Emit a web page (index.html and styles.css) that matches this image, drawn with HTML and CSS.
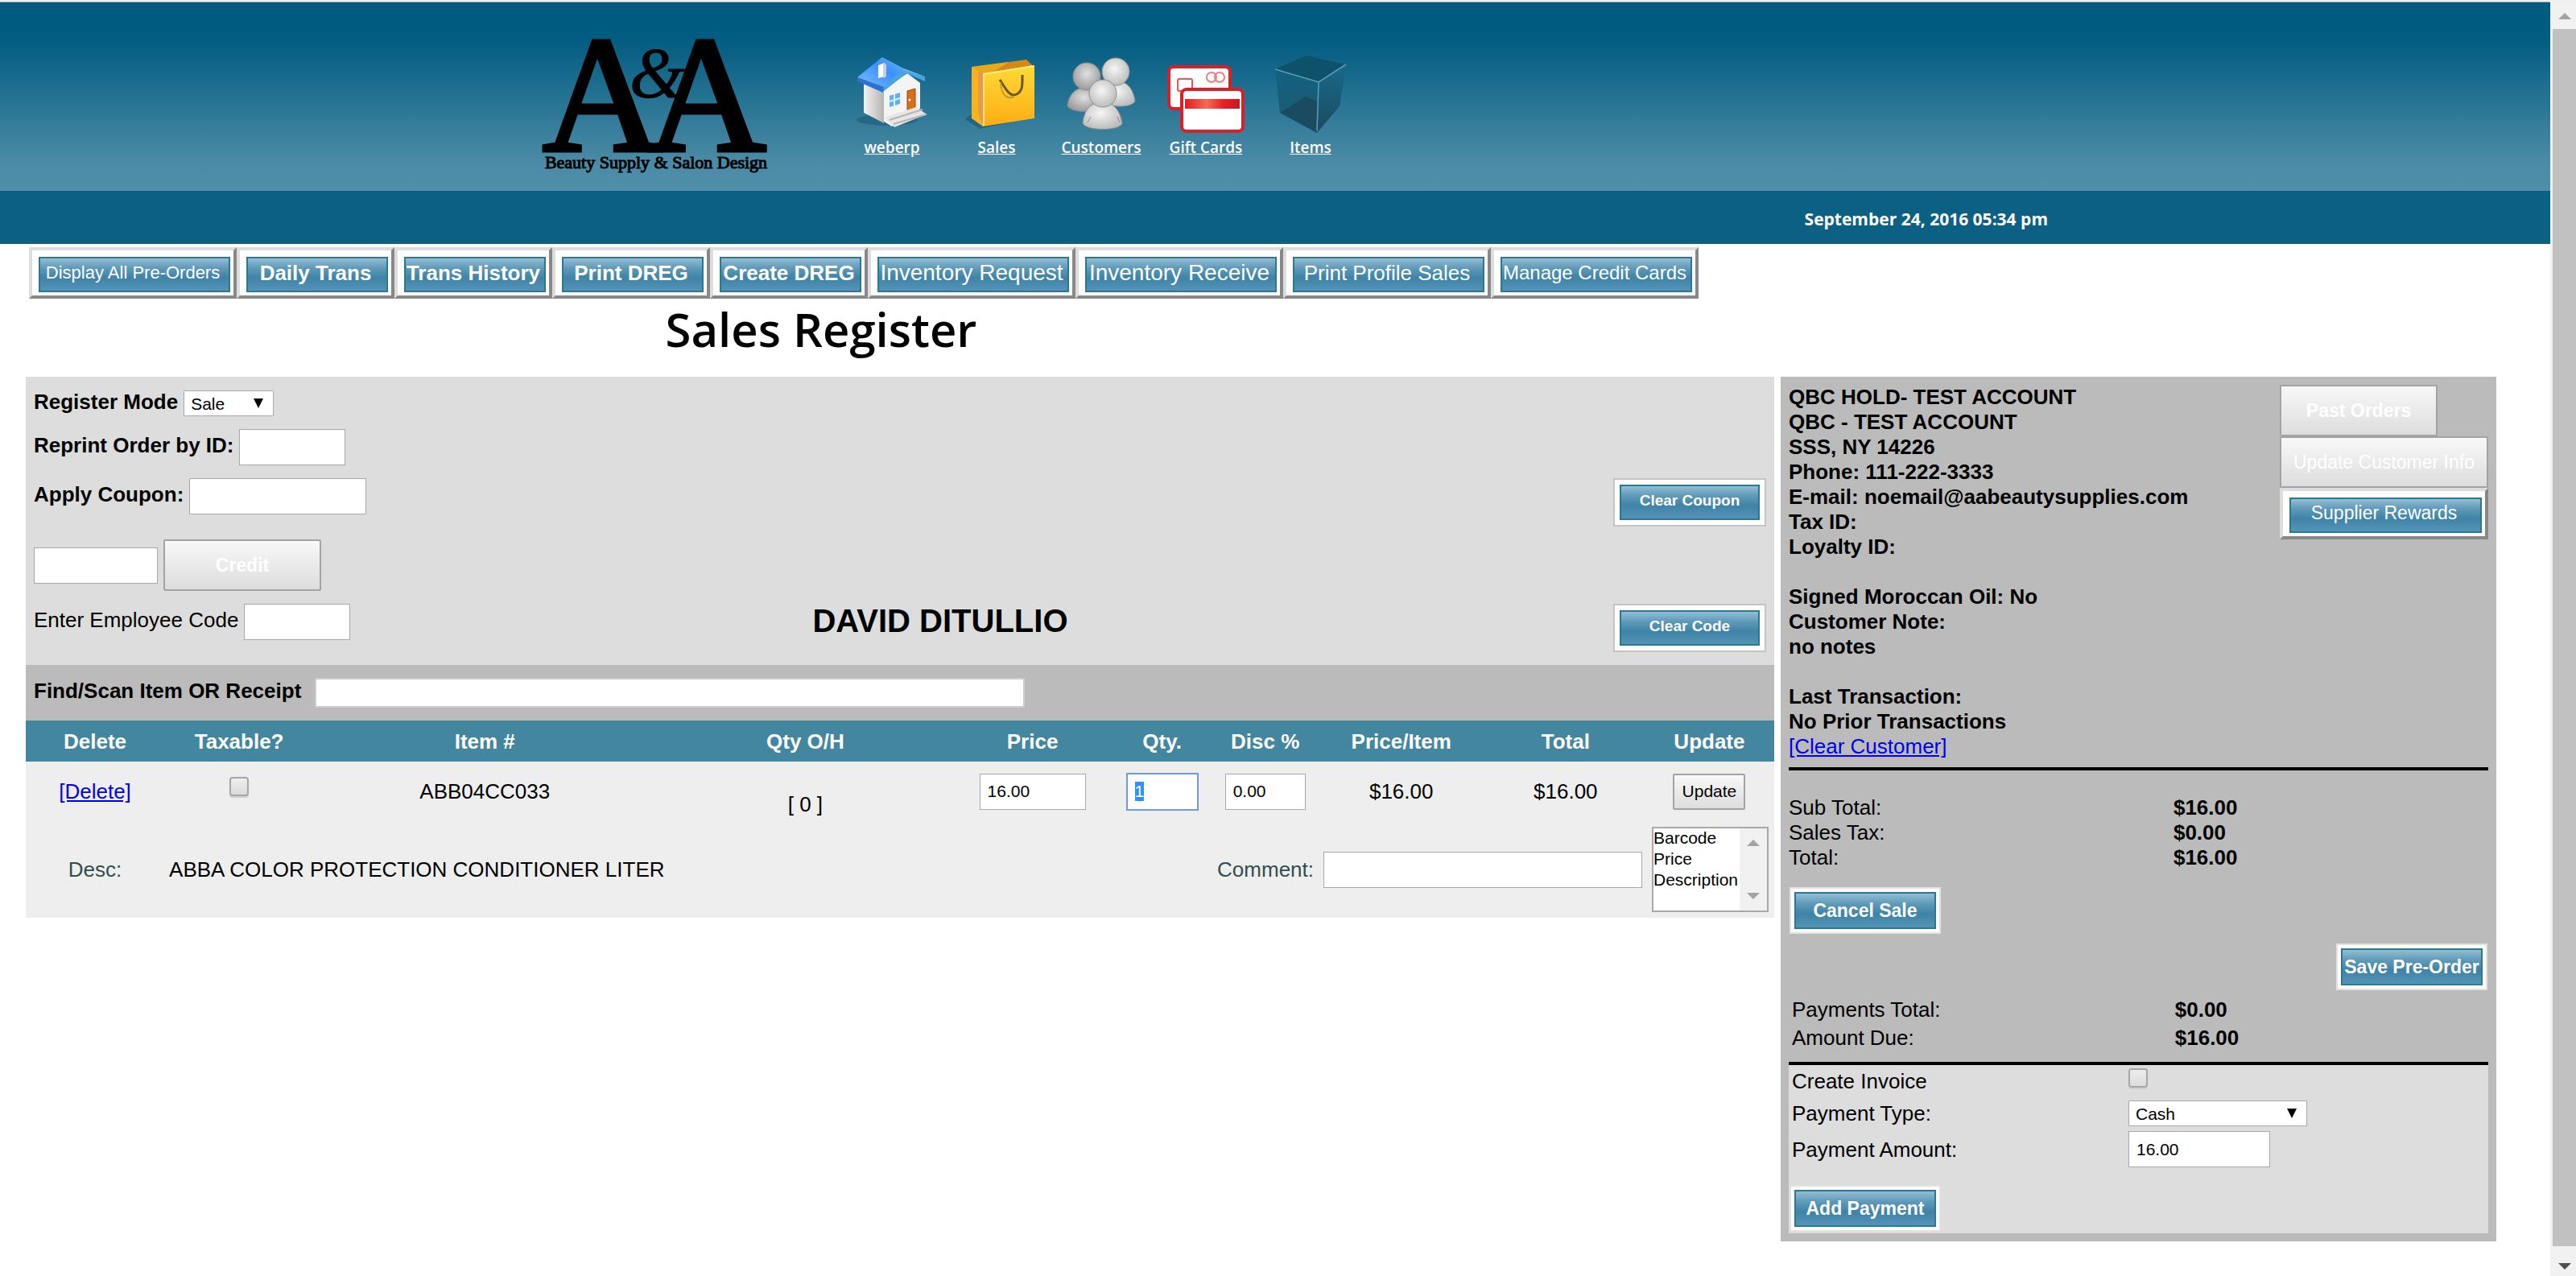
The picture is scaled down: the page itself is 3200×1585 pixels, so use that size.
FILE: index.html
```html
<!DOCTYPE html>
<html lang="en">
<head>
<meta charset="utf-8">
<title>Sales Register</title>
<link rel="stylesheet" href="styles.css">
</head>
<body>
<div class="window">
<div class="page">
  <header>
    <div class="banner">
      <svg class="logo" viewBox="0 0 290 180" role="img" aria-label="A&amp;A Beauty Supply &amp; Salon Design">
        <g class="logo-letters">
          <text x="4" y="147" font-size="206">A</text>
          <text x="133" y="147" font-size="206">A</text>
        </g>
        <text class="logo-amp" x="112" y="80" font-size="88">&amp;</text>
        <text class="logo-tag" x="145" y="169" font-size="22" text-anchor="middle">Beauty Supply &amp; Salon Design</text>
      </svg>
      <nav>
        <a href="#weberp">
          <svg viewBox="0 0 96 96">
            <defs>
              <linearGradient id="wall" x1="0" x2="1"><stop offset="0" stop-color="#f2f2f2"/><stop offset="1" stop-color="#b4b4b4"/></linearGradient>
              <linearGradient id="roof" x1="0" y1="1" x2="1" y2="0"><stop offset="0" stop-color="#7cc0ff"/><stop offset=".6" stop-color="#3a90fa"/><stop offset="1" stop-color="#6fb6ff"/></linearGradient>
            </defs>
            <ellipse cx="42" cy="80" rx="38" ry="7" fill="#0b3a50" opacity=".3"/>
            <path d="M13 33 38 44V84L13 71Z" fill="url(#wall)"/>
            <path d="M38 42 67 22 83 34V66L48 88 38 82Z" fill="#f4f4f4"/>
            <path d="M5 27 36 2 63 18 38 41Z" fill="url(#roof)"/>
            <path d="M5 27 38 39 37 46 5 32Z" fill="#2c72d0"/>
            <path d="M38 39 62 16 89 26V32L66 22 37 45Z" fill="#4ba3e2"/>
            <path d="M36 2 62 16 89 26 63 18Z" fill="#79bcff"/>
            <path d="M31 12 39 9V26L31 28Z" fill="#fff"/><path d="M37 10 41 11V26L37 28Z" fill="#c9cfe0"/>
            <path d="M45 50 58 46V60L45 64Z" fill="#5fb0f5"/><path d="M51 48V62M45 57 58 53" stroke="#d8eeff" stroke-width="2"/>
            <path d="M67 44 77 41V66L67 69Z" fill="#d96d18" stroke="#9b4c12"/><circle cx="70" cy="55" r="1.500" fill="#fff"/>
            <path d="M39 77 78 64 91 73 51 89Z" fill="#e6e6e6"/><path d="M45 80 86 67M50 85 91 73" stroke="#b5b5b5" stroke-width="2"/>
          </svg>
          <span>weberp</span>
        </a>
        <a href="#sales">
          <svg viewBox="0 0 96 96">
            <defs><linearGradient id="bag" x1="0" y1="0" x2="0" y2="1"><stop offset="0" stop-color="#fedb35"/><stop offset="1" stop-color="#ffac14"/></linearGradient></defs>
            <g transform="translate(3 1)">
            <path d="M6 78 16 70 80 78 24 90Z" fill="#0b3a50" opacity=".35"/>
            <path d="M14 13 82 4 90 12 28 22Z" fill="#d58812"/>
            <path d="M14 13 60 7 40 20 28 22Z" fill="#e6a91a"/>
            <path d="M14 13 28 21V87L14 77Z" fill="#f9b31c"/>
            <path d="M22 17 28 21V87L22 70Z" fill="#e89a48"/>
            <path d="M28 21 92 11V77L28 87Z" fill="url(#bag)"/>
            <path d="M29 86V22L91 12" fill="none" stroke="#ffe98a" stroke-width="2"/>
            <path d="M49 29C57 42 62 51 70 47 78 43 77 34 77 23" fill="none" stroke="#665a2a" stroke-width="3"/>
            <path d="M50 32C51 48 57 54 67 50" fill="none" stroke="#c99a25" stroke-width="2"/>
            </g>
          </svg>
          <span>Sales</span>
        </a>
        <a href="#customers">
          <svg viewBox="0 0 96 96">
            <defs>
              <radialGradient id="man" cx=".45" cy=".4" r=".6"><stop offset="0" stop-color="#f6f6f4"/><stop offset="1" stop-color="#bdbdbd"/></radialGradient>
              <radialGradient id="dim" cx=".5" cy=".4" r=".6"><stop offset="0" stop-color="#e0e0e0"/><stop offset="1" stop-color="#999"/></radialGradient>
            </defs>
            <g stroke="#8b8f92">
              <path d="M6 62C8 48 16 40 28 40S45 48 47 62C46 72 9 72 6 62Z" fill="url(#dim)"/>
              <circle cx="30" cy="26" r="17" fill="url(#dim)"/>
              <path d="M50 56C52 42 58 32 68 32 82 32 88 44 90 56 89 65 55 66 50 56Z" fill="url(#man)"/>
              <circle cx="66" cy="20" r="17" fill="url(#man)"/>
              <path d="M25 84C27 66 36 58 49 58S71 66 74 84C72 94 28 94 25 84Z" fill="url(#man)"/>
              <circle cx="50" cy="47" r="17" fill="url(#man)"/>
              <path d="M35 76 31 83M68 76 71 83" fill="none"/>
            </g>
          </svg>
          <span>Customers</span>
        </a>
        <a href="#giftcards">
          <svg viewBox="0 0 96 96">
            <defs><linearGradient id="stripe"><stop offset="0" stop-color="#e81a22"/><stop offset=".4" stop-color="#f36a55"/><stop offset=".7" stop-color="#ec1c24"/><stop offset="1" stop-color="#c41a22"/></linearGradient></defs>
            <rect x="2" y="14" width="76" height="52" rx="6" fill="#fff" stroke="#d91f28" stroke-width="4"/>
            <rect x="13" y="29" width="18" height="15" rx="2" fill="none" stroke="#e4555b" stroke-width="2"/>
            <g fill="none" stroke="#ea8085" stroke-width="2"><circle cx="55" cy="27" r="6"/><circle cx="65" cy="27" r="6"/></g>
            <rect x="18" y="42" width="76" height="52" rx="6" fill="#fff" stroke="#d91f28" stroke-width="4"/>
            <rect x="22" y="54" width="68" height="12" fill="url(#stripe)"/>
          </svg>
          <span>Gift Cards</span>
        </a>
        <a href="#items">
          <svg viewBox="0 0 96 96">
            <defs>
              <linearGradient id="cubeleft" x1="0" y1="0" x2="0" y2="1"><stop offset="0" stop-color="#126181"/><stop offset="1" stop-color="#1f5970"/></linearGradient>
              <linearGradient id="cuberight" x1="0" y1="0" x2="0" y2="1"><stop offset="0" stop-color="#176a8c"/><stop offset="1" stop-color="#1c4a5e"/></linearGradient>
            </defs>
            <path d="M4 17 58 33 56 96 10 71Z" fill="url(#cubeleft)"/>
            <path d="M58 33 92 11 84 63 56 96Z" fill="url(#cuberight)"/>
            <path d="M4 17 42 0 92 11 58 33Z" fill="#0e516b"/>
            <path d="M10 71 42 51 57 57 56 96Z" fill="#1a4559" opacity=".7"/>
            <path d="M4 17 58 33 92 11M58 33 56 94" fill="none" stroke="#5f9db4" stroke-width="1.500"/>
          </svg>
          <span>Items</span>
        </a>
      </nav>
    </div>
    <div class="datebar"><time>September 24, 2016 05:34 pm</time></div>
  </header>

  <div class="toolbar">
    <button class="tool t22 wide">Display All Pre-Orders</button>
    <button class="tool t26 bold">Daily Trans</button>
    <button class="tool t26 bold">Trans History</button>
    <button class="tool t26 bold">Print DREG</button>
    <button class="tool t26 bold">Create DREG</button>
    <button class="tool t28 wide">Inventory Request</button>
    <button class="tool t28 wide">Inventory Receive</button>
    <button class="tool t26 wide">Print Profile Sales</button>
    <button class="tool t24 wide">Manage Credit Cards</button>
  </div>
  <h1>Sales Register</h1>

  <main>
    <section class="register">
      <div class="settings">
        <div class="fields">
          <div class="row mode"><label class="bold" for="mode">Register Mode</label><span class="drop"><select id="mode"><option>Sale</option><option>Return</option></select></span></div>
          <div class="row"><label class="bold" for="reprint">Reprint Order by ID:</label><input id="reprint" class="box s132" type="text"></div>
          <div class="row"><label class="bold" for="coupon">Apply Coupon:</label><input id="coupon" class="box s220" type="text"></div>
          <div class="row credit"><input class="box s154" type="text" aria-label="Credit amount"><button class="plain">Credit</button></div>
          <div class="row"><label for="employee">Enter Employee Code</label><input id="employee" class="box s132" type="text"></div>
        </div>
        <h2>DAVID DITULLIO</h2>
        <div class="clears">
          <button class="glossy clear">Clear Coupon</button>
          <button class="glossy clear">Clear Code</button>
        </div>
      </div>
      <div class="search"><label class="bold" for="find">Find/Scan Item OR Receipt</label><input id="find" type="text"></div>
      <table>
        <colgroup><col class="c172"><col class="c186"><col class="c424"><col class="c372"><col class="c192"><col class="c130"><col class="c126"><col class="c212"><col class="c196"><col class="c161"></colgroup>
        <thead>
          <tr><th>Delete</th><th>Taxable?</th><th>Item #</th><th>Qty O/H</th><th>Price</th><th>Qty.</th><th>Disc %</th><th>Price/Item</th><th>Total</th><th>Update</th></tr>
        </thead>
        <tbody>
          <tr class="item">
            <td><a href="#delete">[Delete]</a></td>
            <td><input type="checkbox" aria-label="Taxable"></td>
            <td>ABB04CC033</td>
            <td class="onhand">[ 0 ]</td>
            <td><input class="box s132" type="text" value="16.00" aria-label="Price"></td>
            <td><input class="box s88" id="qty" type="text" value="1" aria-label="Quantity"></td>
            <td><input class="box s100" type="text" value="0.00" aria-label="Discount"></td>
            <td>$16.00</td>
            <td>$16.00</td>
            <td><button class="update">Update</button></td>
          </tr>
          <tr class="detail">
            <td class="slate">Desc:</td>
            <td colspan="9">
              <div class="desc">
                <span class="descname">ABBA COLOR PROTECTION CONDITIONER LITER</span>
                <label class="slate" for="comment">Comment:</label>
                <input id="comment" class="box s396" type="text">
                <div class="listbox">
                  <select size="4" aria-label="Label fields"><option>Barcode</option><option>Price</option><option>Description</option></select>
                  <div class="listbar"><i class="up"></i><i class="down"></i></div>
                </div>
              </div>
            </td>
          </tr>
        </tbody>
      </table>
    </section>

    <aside>
      <div class="customer">
        <address>
          QBC HOLD- TEST ACCOUNT<br>QBC - TEST ACCOUNT<br>SSS, NY 14226<br>Phone: 111-222-3333<br>E-mail: noemail@aabeautysupplies.com<br>Tax ID:<br>Loyalty ID:<br><br>Signed Moroccan Oil: No<br>Customer Note:<br>no notes<br><br>Last Transaction:<br>No Prior Transactions<br>
          <a href="#clear">[Clear Customer]</a>
        </address>
        <div class="customer-actions">
          <button class="plain">Past Orders</button>
          <button class="plain regular">Update Customer Info</button>
          <button class="tool reward">Supplier Rewards</button>
        </div>
      </div>
      <hr>
      <dl class="totals">
        <dt>Sub Total:</dt><dd>$16.00</dd>
        <dt>Sales Tax:</dt><dd>$0.00</dd>
        <dt>Total:</dt><dd>$16.00</dd>
      </dl>
      <button class="glossy action">Cancel Sale</button>
      <button class="glossy action save">Save Pre-Order</button>
      <dl class="totals due">
        <dt>Payments Total:</dt><dd>$0.00</dd>
        <dt>Amount Due:</dt><dd>$16.00</dd>
      </dl>
      <hr>
      <div class="payment">
        <label for="invoice">Create Invoice</label><input id="invoice" type="checkbox">
        <label for="paytype">Payment Type:</label><span class="drop"><select id="paytype"><option>Cash</option><option>Check</option></select></span>
        <label for="payamount">Payment Amount:</label><input id="payamount" class="box s176" type="text" value="16.00">
        <button class="glossy action">Add Payment</button>
      </div>
    </aside>
  </main>
</div>
<div class="scrollbar" aria-hidden="true"><i class="up"></i><div class="thumb"></div><i class="down"></i></div>
</div>
<script src="script.js"></script>
</body>
</html>
```
FILE: styles.css
```css
* { box-sizing: border-box; }
body {
  margin: 0;
  background: #fff;
  color: #000;
  font: 26px/30px "Liberation Sans", Arial, sans-serif;
}
button, input, select { font-family: inherit; margin: 0; }
a { color: #00e; }
.bold { font-weight: bold; }
.slate { color: #2f4f4f; }

.window {
  display: grid;
  grid-template-columns: 1fr 32px;
  min-height: 100vh;
  border-top: 2px solid #f0f0f0;
}
.page { border-top: 1px solid #aaa; min-width: 0; }

/* header */
.banner {
  display: flex;
  height: 234px;
  padding: 37px 0 0 670px;
  background: linear-gradient(#005b80 18%, #4a8aa5 84%, #508fa9);
}
.logo { width: 290px; height: 180px; margin-right: 83px; overflow: visible; font-family: "Liberation Serif", serif; }
.logo-letters { stroke: #000; stroke-width: 5; }
.logo-amp { font-style: italic; stroke: #000; stroke-width: 1; }
.logo-tag { stroke: #000; stroke-width: 1; }
nav { display: flex; padding-top: 29px; }
nav a {
  width: 130px;
  display: flex;
  flex-direction: column;
  align-items: center;
  color: #fff;
  font: 600 19px/30px "Open Sans", sans-serif;
}
nav svg { width: 96px; height: 96px; margin-bottom: 3px; }
.datebar {
  display: flex;
  justify-content: flex-end;
  height: 66px;
  padding: 20px 624px 0 0;
  background: #0b6084;
  color: #fff;
  font: bold 21px/30px "Open Sans", sans-serif;
}

/* glossy blue buttons */
.tool, .glossy { color: #fff; padding: 0; white-space: nowrap; }
.toolbar { display: flex; padding: 4px 0 0 36px; }
.tool {
  width: 196px;
  height: 64px;
  border: 4px solid;
  border-color: #ddd #888 #888 #ddd;
  background:
    linear-gradient(#93bdd6, #5f9ab8 30%, #3f83a7 60%, #5593b8) 10px 10px / calc(100% - 16px) calc(100% - 16px) no-repeat,
    linear-gradient(#2b788f, #2b788f) 8px 8px / calc(100% - 12px) calc(100% - 12px) no-repeat,
    #fff;
}
.wide { width: 258px; }
.t22 { font-size: 22px; }
.t24 { font-size: 24px; }
.t26 { font-size: 26px; }
.t28 { font-size: 28px; }
.glossy {
  border: 2px solid #c4c4c4;
  font-weight: bold;
  background:
    linear-gradient(#93bdd6, #5f9ab8 30%, #3f83a7 60%, #5593b8) 8px 8px / calc(100% - 16px) calc(100% - 16px) no-repeat,
    linear-gradient(#2b788f, #2b788f) 6px 6px / calc(100% - 12px) calc(100% - 12px) no-repeat,
    #fff;
}
.plain, .update {
  border: 2px solid #a3a3a3;
  border-radius: 2px;
  background: linear-gradient(#f8f8f8, #ddd);
}
.plain {
  width: 196px;
  height: 64px;
  padding: 0;
  color: #fff;
  font-size: 23px;
  font-weight: bold;
}

h1 {
  width: 2040px;
  margin: 0;
  height: 97px;
  text-align: center;
  font: 600 58px/76px "Open Sans", sans-serif;
}

main {
  display: grid;
  grid-template-columns: 2172fr 889fr;
  gap: 8px;
  align-items: start;
  padding: 0 67px 0 32px;
}

/* form fields */
.box {
  height: 45px;
  padding: 0 9px;
  border: 1px solid #a9a9a9;
  background: #fff;
  font-size: 21px;
}
.s88 { width: 88px; }
.s100 { width: 100px; }
.s132 { width: 132px; }
.s154 { width: 154px; }
.s176 { width: 176px; }
.s220 { width: 220px; }
.s396 { width: 396px; }
#qty { outline: 2px solid #6f9ae0; outline-offset: -1px; }
::selection { background: #3390ff; color: #fff; }
input[type="checkbox"] {
  appearance: none;
  width: 24px;
  height: 24px;
  border: 2px solid #a6a6a6;
  border-radius: 4px;
  background: linear-gradient(#eee, #dcdcdc);
  box-shadow: 0 2px 0 #d0d0d0;
}
.drop { position: relative; display: inline-flex; }
.drop select {
  appearance: none;
  width: 112px;
  height: 32px;
  padding: 0 8px;
  border: 1px solid #a9a9a9;
  border-radius: 1px;
  background: #fff;
  font-size: 21px;
}
.drop::after {
  content: "";
  position: absolute;
  right: 13px;
  top: 10px;
  border: 6px solid transparent;
  border-top: 12px solid #000;
  border-bottom: 0;
}

.settings {
  display: grid;
  grid-template-columns: 1fr auto 1fr;
  height: 358px;
  padding: 10px;
  background: #ddd;
}
.fields { padding-top: 7px; }
.row { display: flex; gap: 7px; height: 45px; margin-bottom: 16px; }
.row label { line-height: 40px; white-space: nowrap; }
.row.mode { height: 32px; }
.row.mode label { line-height: 28px; }
.row.credit { height: 64px; align-items: center; margin-top: 31px; }
h2 { margin: 0; align-self: end; font-size: 40px; line-height: 50px; padding: 0 0 20px 100px; }
.clears { display: flex; flex-direction: column; align-items: flex-end; gap: 96px; padding-top: 116px; }
.clear { width: 190px; height: 60px; font-size: 19px; padding-bottom: 4px; }

.search {
  display: flex;
  gap: 17px;
  height: 69px;
  padding: 16px 10px;
  background: #bbb;
}
.search label { line-height: 33px; }
.search input { width: 882px; height: 37px; padding: 0 8px; border: 2px solid #ccc; background: #fff; font-size: 21px; }

/* sale lines */
table { width: 100%; table-layout: fixed; border-collapse: collapse; background: #eee; }
.c172 { width: 172px; } .c186 { width: 186px; } .c424 { width: 424px; } .c372 { width: 372px; } .c192 { width: 192px; }
.c130 { width: 130px; } .c126 { width: 126px; } .c212 { width: 212px; } .c196 { width: 196px; } .c161 { width: 161px; }
th { height: 51px; padding: 0; background: #4386a0; color: #fff; }
td { padding: 0; text-align: center; }
td input { vertical-align: middle; }
.item { height: 74px; }
.item input[type="checkbox"] { margin-bottom: 12px; }
.onhand { padding-top: 32px; }
.update { width: 90px; height: 45px; padding: 0; font-size: 21px; vertical-align: middle; }
.detail { height: 120px; }
.desc { display: flex; align-items: center; padding: 0 7px 0 6px; }
.descname { flex: 1; text-align: left; }
.desc .box { margin: 0 12px; }
.listbox { display: flex; width: 145px; height: 106px; border: 2px solid #a9a9a9; background: #fff; }
.listbox select { flex: 1; width: 107px; border: 0; padding: 0; background: #fff; font-size: 21px; overflow: hidden; border-radius: 0; }
.listbox option { padding: 0; min-height: 26px; line-height: 26px; }
.listbar {
  display: flex;
  flex-direction: column;
  justify-content: space-between;
  align-items: center;
  width: 34px;
  padding: 14px 0;
  background: #f1f1f1;
}
.up, .down { border: 8px solid transparent; border-top: 0; border-bottom: 8px solid #a3a3a3; }
.down { border-top: 8px solid #a3a3a3; border-bottom: 0; }

/* customer and payment panel */
aside { padding: 10px; background: #bbb; }
.customer { display: flex; justify-content: space-between; height: 475px; }
address { font-style: normal; font-weight: bold; line-height: 31px; white-space: nowrap; }
address a { font-weight: normal; }
.customer-actions { display: flex; flex-direction: column; width: 259px; }
.customer-actions .regular { width: 100%; font-weight: normal; }
.reward { width: 100%; font-size: 23px; padding-bottom: 2px; }
hr { height: 4px; margin: 0; border: 0; background: #000; }
.totals {
  display: grid;
  grid-template-columns: 55% 45%;
  margin: 0;
  padding: 31px 0 21px;
  line-height: 31px;
}
dd { margin: 0; font-weight: bold; }
.action {
  display: block;
  width: 188px;
  height: 58px;
  margin-left: 1px;
  border-color: #e2e2e2;
  font-size: 23px;
  background:
    linear-gradient(#93bdd6, #5f9ab8 30%, #3f83a7 60%, #5593b8) 6px 6px / calc(100% - 12px) calc(100% - 12px) no-repeat,
    linear-gradient(#2b788f, #2b788f) 4px 4px / calc(100% - 8px) calc(100% - 8px) no-repeat,
    #fff;
}
.save { margin: 12px 1px 0 auto; }
.due { padding: 7px 0 12px 4px; line-height: 35px; }
.payment {
  display: grid;
  grid-template-columns: 418px 1fr;
  row-gap: 4px;
  align-items: center;
  justify-items: start;
  padding: 2px 0 2px 4px;
  background: #ddd;
}
.payment label { line-height: 36px; }
.payment input[type="checkbox"] { align-self: start; margin-top: 2px; }
.payment .drop select { width: 222px; }
.payment .action { margin: 18px 0 0 -3px; }

/* window scroll bar */
.scrollbar {
  display: flex;
  flex-direction: column;
  align-items: center;
  padding: 14px 0 8px 3px;
  background: #f1f1f1;
}
.scrollbar .thumb { flex: 1; width: 100%; margin: 12px 0 21px; background: #c1c1c1; }
.scrollbar .down { border-top-color: #505050; }
```
FILE: script.js
```js
const qty = document.getElementById("qty");
qty.focus();
qty.select();
```
